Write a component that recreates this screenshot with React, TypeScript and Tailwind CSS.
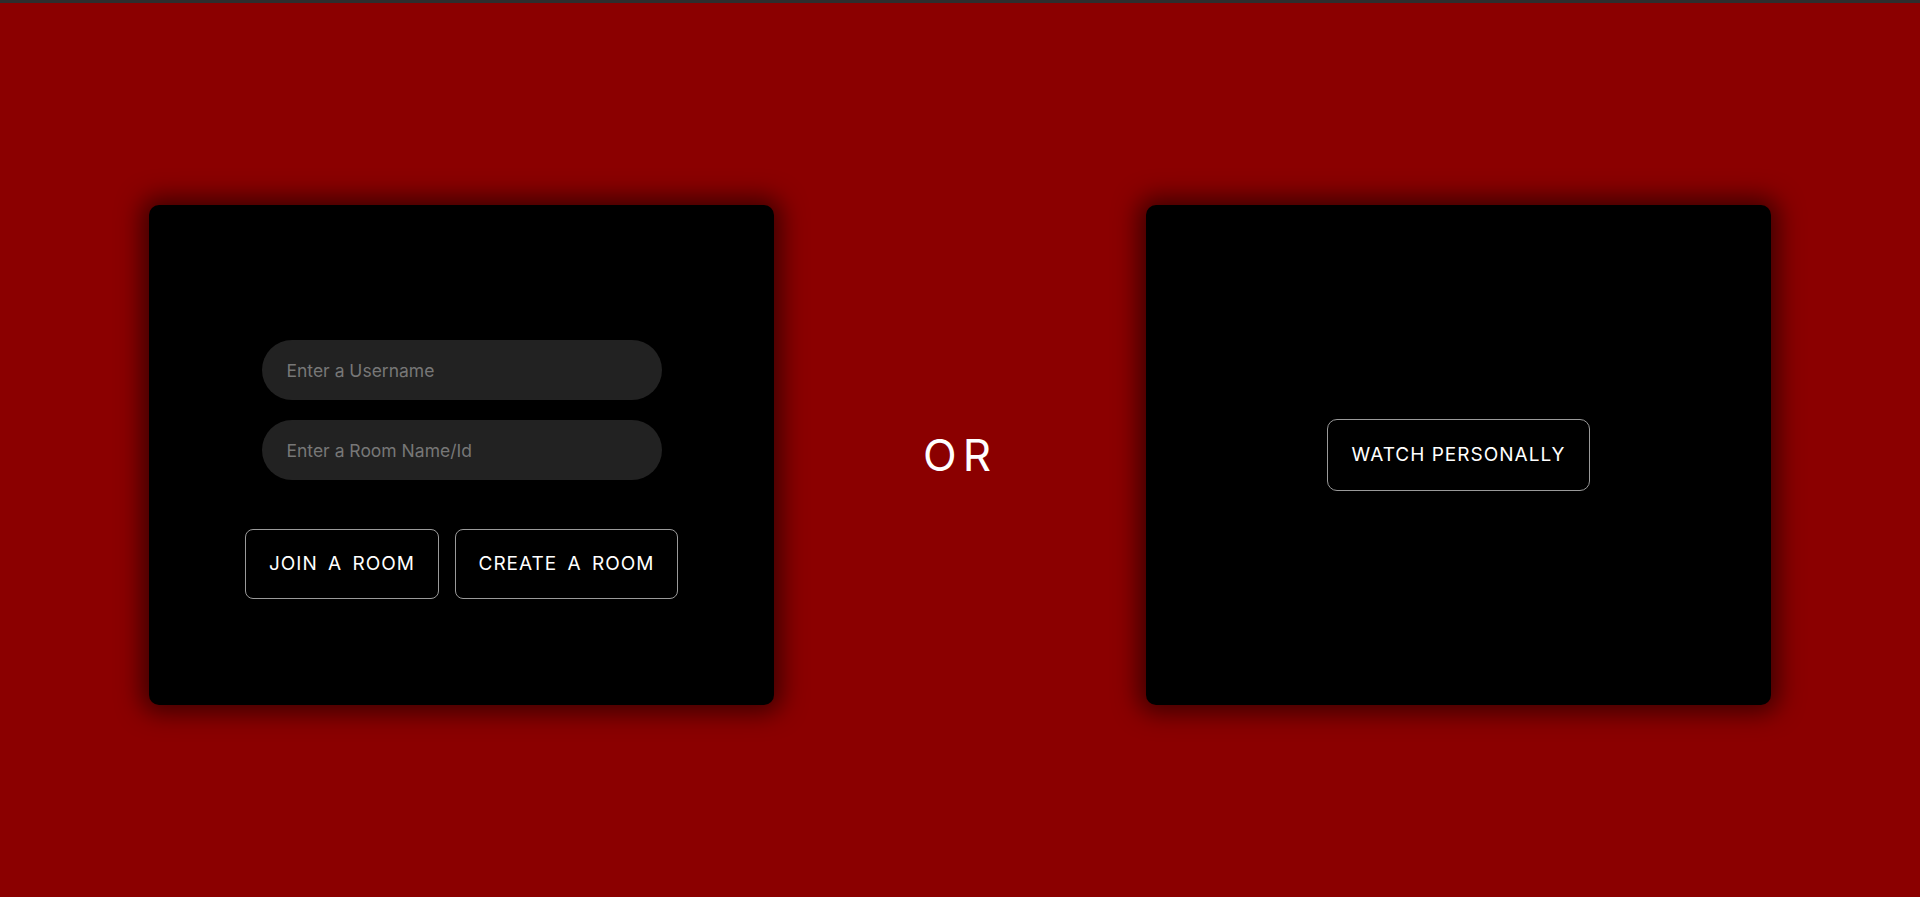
import React from 'react';

const font = "font-['Inter','Open_Sans',sans-serif]";

const App: React.FC = () => {
  return (
    <div className={`min-h-screen bg-[#8b0000] ${font}`}>
      <div className="h-[3px] bg-[#2e2e2e]" />
      <main className="flex items-center justify-evenly pt-[202px]">
        {/* join / create card */}
        <section className="w-[625px] h-[500px] bg-black rounded-[10px] shadow-[0_0_25px_8px_rgba(0,0,0,0.55)] flex flex-col items-center pt-[135px]">
          <div className="flex flex-col gap-5">
            <input
              type="text"
              placeholder="Enter a Username"
              className="w-[400px] h-[60px] rounded-full bg-[#222222] pl-[25px] text-[17.5px] text-white placeholder:text-[#777777] outline-none"
            />
            <input
              type="text"
              placeholder="Enter a Room Name/Id"
              className="w-[400px] h-[60px] rounded-full bg-[#222222] pl-[25px] text-[17.5px] text-white placeholder:text-[#777777] outline-none"
            />
          </div>
          <div className="flex gap-4 mt-[49px]">
            <button className="w-[194px] h-[70px] rounded-lg border border-[#9a9a9a] text-white text-[19px] tracking-[1px] [word-spacing:4px]">
              JOIN A ROOM
            </button>
            <button className="w-[223px] h-[70px] rounded-lg border border-[#9a9a9a] text-white text-[19px] tracking-[1px] [word-spacing:4px]">
              CREATE A ROOM
            </button>
          </div>
        </section>

        <div className="text-white text-[44px] tracking-[6px] leading-none">OR</div>

        {/* solo card */}
        <section className="w-[625px] h-[500px] bg-black rounded-[10px] shadow-[0_0_25px_8px_rgba(0,0,0,0.55)] flex items-center justify-center">
          <button className="w-[263px] h-[72px] rounded-[10px] border border-[#9a9a9a] text-white text-[19px] tracking-[1px]">
            WATCH PERSONALLY
          </button>
        </section>
      </main>
    </div>
  );
};

export default App;
